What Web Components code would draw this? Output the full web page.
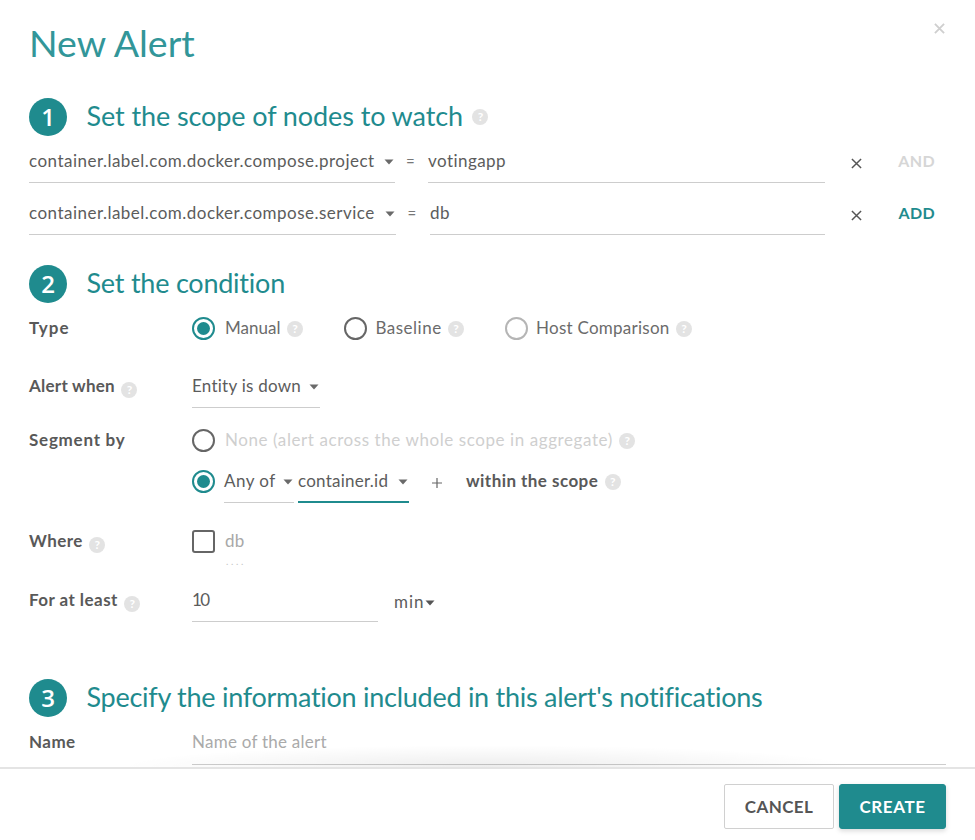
<!DOCTYPE html>
<html lang="en"><head><meta charset="utf-8"><title>New Alert</title>
<style>
html,body{margin:0;padding:0;background:#fff}
body{font:400 17px/1.2 Lato,"Open Sans",sans-serif;letter-spacing:.25px;color:#5c5c5c;width:975px;height:840px;overflow:hidden}
</style></head><body>
<x-dialog>
  <x-title>New Alert</x-title>
  <x-step n="1" style="letter-spacing:-.1px">Set the scope of nodes to watch<x-help slot="after"></x-help></x-step>

  <x-filter style="margin-top:6px" eq="33">
    <x-select slot="key" style="width:366px;letter-spacing:.48px">container.label.com.docker.compose.project</x-select>
    <span slot="value">votingapp</span>
    <span slot="action">AND</span>
  </x-filter>
  <x-filter style="margin-top:11px" eq="34" active>
    <x-select slot="key" style="width:367px;letter-spacing:.48px">container.label.com.docker.compose.service</x-select>
    <span slot="value">db</span>
    <span slot="action">ADD</span>
  </x-filter>

  <x-step n="2" style="margin-top:30px;letter-spacing:-.23px">Set the condition</x-step>

  <x-row label="Type" style="margin-top:6px;--lls:1px">
    <x-radio checked style="letter-spacing:0">Manual<x-help></x-help></x-radio>
    <x-radio style="margin-left:41.5px;letter-spacing:.5px;--gap:8px">Baseline<x-help></x-help></x-radio>
    <x-radio style="margin-left:41px;--gap:8px" tone="light">Host Comparison<x-help></x-help></x-radio>
  </x-row>
  <x-row label="Alert when" help style="margin-top:20px;--lls:.25px">
    <x-select style="width:128px">Entity is down</x-select>
  </x-row>
  <x-row label="Segment by" style="margin-top:13px;--lls:.75px">
    <x-radio tone="muted" style="letter-spacing:.58px">None (alert across the whole scope in aggregate)<x-help></x-help></x-radio>
  </x-row>
  <x-row style="margin-top:3px">
    <x-radio checked>
      <x-select style="width:70px;margin-left:-1px;letter-spacing:.45px">Any of</x-select><x-select active style="width:111px;margin-left:4px">container.id</x-select>
      <x-plus></x-plus>
      <strong>within the scope</strong><x-help></x-help>
    </x-radio>
  </x-row>
  <x-row label="Where" help style="margin-top:19px">
    <x-check>db</x-check>
  </x-row>
  <x-row label="For at least" help style="margin-top:21px">
    <x-field style="width:186px;letter-spacing:-1.5px">10</x-field>
    <x-select bare style="margin-left:16px;letter-spacing:1px">min</x-select>
  </x-row>

  <x-step n="3" style="margin-top:57px;letter-spacing:-.27px">Specify the information included in this alert's notifications</x-step>

  <x-row label="Name" style="margin-top:6px">
    <x-field style="flex:1" tone="placeholder">Name of the alert</x-field>
  </x-row>

  <x-footer>
    <x-button>CANCEL</x-button>
    <x-button primary>CREATE</x-button>
  </x-footer>
</x-dialog>

<script>
const TEAL='#1f8b8e';
function def(name,css,html){
  class C extends HTMLElement{
    constructor(){super();const r=this.attachShadow({mode:'open'});r.innerHTML='<style>'+css+'</style>'+(typeof html==='function'?html(this):html);}
  }
  customElements.define(name,C);
}
const CARET='<svg width="10" height="6" viewBox="0 0 10 6" aria-hidden="true"><path d="M0.5 0.5h9L5 5.5z" fill="currentColor"/></svg>';
const CROSS=(c,s,w)=>`<svg width="${s}" height="${s}" viewBox="0 0 12 12" aria-hidden="true"><path d="M1 1L11 11M11 1L1 11" stroke="${c}" stroke-width="${w}" fill="none"/></svg>`;

def('x-dialog',`:host{display:block;position:relative;width:975px;height:840px;box-sizing:border-box;padding:0 29px;background:#fff}
  .close{position:absolute;right:30px;top:23px;line-height:0}`,
  `<div class="close">${CROSS('#cfcfcf',11,2)}</div><slot></slot>`);

def('x-title',`:host{display:block;height:98px;box-sizing:border-box;padding:21px 0 0 0;font:400 37.5px/44px Lato,sans-serif;letter-spacing:0;color:#329699}`,'<slot></slot>');

def('x-step',`:host{display:flex;align-items:center;height:38px;color:${TEAL};font:400 27px/36px Lato,sans-serif}
  .n{flex:none;width:38px;height:38px;border-radius:50%;background:${TEAL};color:#fff;font:600 24px/38px "Open Sans",sans-serif;letter-spacing:0;text-align:center;margin-right:19.5px}
  .t{white-space:pre;padding-bottom:2px}
  ::slotted(x-help){margin-left:9.5px}`,
  h=>`<span class="n">${h.getAttribute('n')}</span><span class="t"><slot></slot></span><slot name="after"></slot>`);

def('x-help',`:host{display:inline-flex;flex:none;width:16px;height:16px;border-radius:50%;background:#e3e3e3;color:#fff;font:700 12px/16px Lato,sans-serif;letter-spacing:0;align-items:center;justify-content:center;margin-left:6.5px;vertical-align:-2px}`,'?');

def('x-select',`:host{display:inline-flex;align-items:center;box-sizing:border-box;height:41px;line-height:38px;padding-bottom:2px;border-bottom:1px solid #cdcdcd;white-space:nowrap;flex:none;justify-content:space-between;color:#5c5c5c}
  :host([active]){border-bottom:2px solid ${TEAL};padding-bottom:1px}
  :host([bare]){border-bottom:0;padding-bottom:0;justify-content:flex-start}
  svg{flex:none;margin:2px 1px 0 4px;color:#6a6a6a}
  :host([bare]) svg{margin-left:0;color:#555}`,
  `<span><slot></slot></span>${CARET}`);

def('x-filter',`:host{display:flex;align-items:flex-start;height:41px}
  .eq{flex:none;box-sizing:border-box;padding-right:2px;text-align:center;line-height:38px;font-size:15px;color:#777}
  .val{flex:1;box-sizing:border-box;height:41px;line-height:38px;border-bottom:1px solid #cdcdcd;min-width:0;letter-spacing:.45px}
  .x{flex:none;width:62px;height:38px;display:flex;align-items:center;justify-content:center;padding-top:5px;box-sizing:border-box}
  .act{flex:none;width:48px;margin-right:11px;text-align:right;font:700 16px/38px Lato,sans-serif;letter-spacing:.35px;color:${TEAL}}
  :host(:not([active])) .act{color:#d6d6d6}`,
  h=>`<slot name="key"></slot><span class="eq" style="width:${h.getAttribute('eq')}px">=</span><span class="val"><slot name="value"></slot></span><span class="x">${CROSS('#555',11,1.6)}</span><span class="act"><slot name="action"></slot></span>`);

def('x-row',`:host{display:flex;align-items:flex-start;min-height:38px}
  .l{flex:none;width:163px;line-height:38px;font-weight:700;font-size:17px;letter-spacing:var(--lls,.45px);color:#595959;white-space:nowrap}
  .c{flex:1;display:flex;align-items:flex-start;min-width:0}`,
  h=>`<div class="l">${h.getAttribute('label')||''}${h.hasAttribute('help')?'<x-help></x-help>':''}</div><div class="c"><slot></slot></div>`);

def('x-radio',`:host{display:inline-flex;align-items:flex-start;line-height:38px;white-space:nowrap;color:#6b6b6b;flex:none}
  :host([tone=muted]){color:#cfcfcf}
  .o{flex:none;box-sizing:border-box;width:23px;height:23px;border-radius:50%;border:2px solid #666;margin:8px var(--gap,10px) 0 0;display:flex;align-items:center;justify-content:center}
  :host([tone=light]) .o{border-color:#b5b5b5}
  :host([checked]) .o{border-color:${TEAL}}
  :host([checked]) .o::after{content:"";width:13px;height:13px;border-radius:50%;background:${TEAL}}
  .t{display:flex;align-items:flex-start}
  ::slotted(x-help){margin-top:12px}
  ::slotted(strong){font-weight:700;font-size:17px;letter-spacing:.45px;color:#595959}`,
  `<span class="o"></span><span class="t"><slot></slot></span>`);

def('x-plus',`:host{display:block;flex:none;width:57px;box-sizing:border-box;padding-left:22px;height:38px;line-height:0}
  svg{margin-top:15px}`,
  `<svg width="12" height="12" viewBox="0 0 12 12" aria-hidden="true"><path d="M6 1V11M1 6H11" stroke="#666" stroke-width="1.2"/></svg>`);

def('x-check',`:host{display:inline-flex;position:relative;align-items:flex-start;color:#a8a8a8;line-height:38px}
  .b{flex:none;box-sizing:border-box;width:23px;height:23px;border:2px solid #666;border-radius:3px;margin:8px 10px 0 0}
  .d{position:absolute;left:34px;top:34px;font:10px/10px Lato,sans-serif;letter-spacing:2.6px;color:#c4c4c4}`,
  `<span class="b"></span><slot></slot><span class="d">....</span>`);

def('x-field',`:host{display:block;flex:none;box-sizing:border-box;height:41px;line-height:38px;border-bottom:1px solid #cdcdcd;color:#5c5c5c}
  :host([tone=placeholder]){color:#aaa;height:42px}`,'<slot></slot>');

def('x-footer',`:host{display:flex;justify-content:flex-end;gap:5px;position:absolute;left:0;right:0;top:767px;height:73px;box-sizing:border-box;padding:15px 29px 0;border-top:2px solid #e4e4e4;background:#fff}
  .fade{position:absolute;left:120px;right:120px;top:-24px;height:22px;pointer-events:none;background:radial-gradient(ellipse 50% 100% at 50% 100%,rgba(0,0,0,.07),rgba(0,0,0,0));}`,
  `<div class="fade"></div><slot></slot>`);

def('x-button',`:host{display:inline-flex;align-items:center;justify-content:center;box-sizing:border-box;width:110px;height:45px;padding-bottom:1px;border:1px solid #d0d0d0;border-radius:2px;font:700 17px/1 Lato,sans-serif;letter-spacing:.4px;color:#555;background:#fff}
  :host([primary]){width:107px;background:${TEAL};border-color:${TEAL};color:#fff;letter-spacing:.6px;box-shadow:0 2px 5px rgba(0,0,0,.15);border-radius:3px}`,'<slot></slot>');
</script>
</body></html>
